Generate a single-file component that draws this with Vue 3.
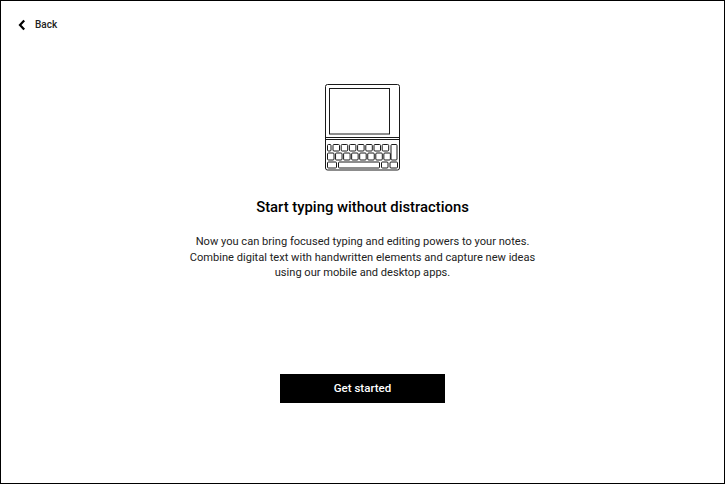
<template>
  <div class="frame">
    <a class="back">
      <svg class="chevron" width="8" height="12" viewBox="0 0 8 12">
        <path d="M6.2 1.5 L2 6 L6.2 10.5" fill="none" stroke="#000" stroke-width="2.2" />
      </svg>
      <span>Back</span>
    </a>

    <svg class="device" width="76" height="88" viewBox="0 0 76 88" fill="none" stroke="#1a1a1a">
      <rect x="0.5" y="0.5" width="74" height="85.5" rx="2" />
      <rect x="4.5" y="4.5" width="60" height="45.5" />
      <path d="M0.5 53.5 H74.5 M0.5 55.5 H74.5" />
      <rect v-for="k in keys" :key="k.x + '-' + k.y" :x="k.x" :y="k.y" :width="k.w" :height="k.h" rx="1" />
    </svg>

    <h1>Start typing without distractions</h1>
    <p>
      Now you can bring focused typing and editing powers to your notes.<br />
      Combine digital text with handwritten elements and capture new ideas<br />
      using our mobile and desktop apps.
    </p>

    <button>Get started</button>
  </div>
</template>

<script setup>
const keys = []
// top row
keys.push({ x: 2.5, y: 60.5, w: 3.5, h: 6.5 })
for (let i = 0; i < 7; i++) keys.push({ x: 8 + i * 8.2, y: 60.5, w: 6.5, h: 6.5 })
keys.push({ x: 66, y: 60.5, w: 6, h: 15.5 })
// middle row
for (let i = 0; i < 8; i++) keys.push({ x: 2.5 + i * 8.05, y: 69, w: 6.5, h: 7 })
// bottom row
keys.push({ x: 2.5, y: 78, w: 9, h: 6 })
keys.push({ x: 13.5, y: 78, w: 41, h: 6 })
keys.push({ x: 56.5, y: 78, w: 6.5, h: 6 })
keys.push({ x: 65, y: 78, w: 7.5, h: 6 })
</script>

<style>
body {
  margin: 0;
  background: #fff;
}
</style>

<style scoped>
.frame {
  box-sizing: border-box;
  width: 725px;
  height: 484px;
  border: 1px solid #000;
  display: flex;
  flex-direction: column;
  align-items: center;
  font-family: Roboto, "Liberation Sans", sans-serif;
  color: #111;
}

.back {
  align-self: flex-start;
  display: flex;
  align-items: center;
  gap: 9px;
  margin: 17px 0 0 17px;
  font-size: 10px;
  font-weight: 500;
  line-height: 14px;
  color: #222;
}

.device {
  margin-top: 52px;
}

h1 {
  margin: 25px 0 0;
  font-size: 14.85px;
  font-weight: 500;
  line-height: 20px;
  color: #000;
}

p {
  margin: 17px 0 0;
  font-size: 11.1px;
  line-height: 15.5px;
  text-align: center;
  color: #222;
}

button {
  margin-top: 93px;
  width: 165px;
  height: 29px;
  border: none;
  background: #000;
  color: #fff;
  font-family: inherit;
  font-size: 11.5px;
  font-weight: 500;
}
</style>
